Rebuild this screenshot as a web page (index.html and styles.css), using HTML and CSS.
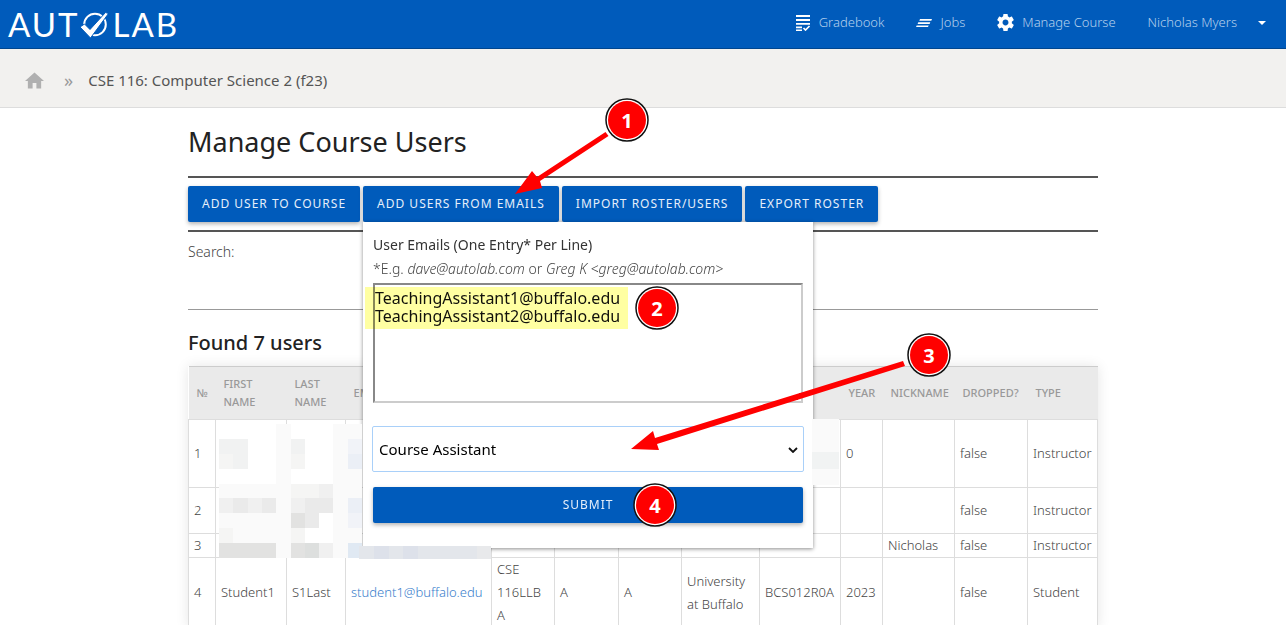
FILE: index.html
```html
<!DOCTYPE html>
<html lang="en">
<head>
<meta charset="utf-8">
<title>Manage Course Users</title>
<link rel="stylesheet" href="styles.css">
</head>
<body>
<header class="navbar">
  <a class="logo" href="#" aria-label="Autolab">
    <span>AUT</span>
    <svg class="logo-mark" viewBox="80 10 28 28" aria-hidden="true">
      <circle cx="95" cy="24.500" r="10.800" fill="none" stroke="#fff" stroke-width="2"/>
      <path d="M80 27L84.500 24L90 29.500L105.500 12.500L108.500 13.500L90.500 38Z" fill="#fff" stroke="#005bbb" stroke-width="1"/>
    </svg>
    <span>LAB</span>
  </a>
  <nav class="nav-links">
    <a class="nav-link" href="#">
      <svg class="nav-icon" viewBox="0 0 16 16" aria-hidden="true"><path d="M1 0h14v2H1zM1 4h14v2H1zM1 8h14v1.700H1zM1 11.500h6v1.700H1zM1 14.500h6v1.500H1z" fill="#fff"/><path d="M8.500 13l2 2 4-4" fill="none" stroke="#fff" stroke-width="1.700"/></svg>
      Gradebook
    </a>
    <a class="nav-link" href="#">
      <svg class="nav-icon" viewBox="0 0 16 16" aria-hidden="true"><path d="M4 4h12l-.7 1.700h-12zM2.300 7.200h12l-.7 1.700h-12zM.7 10.400h12l-.7 1.700H0z" fill="#fff"/></svg>
      Jobs
    </a>
    <a class="nav-link" href="#">
      <svg class="nav-icon gear" viewBox="2 2 20 20" aria-hidden="true"><path fill="#fff" d="M19.430 12.980c.04-.32.07-.64.07-.98s-.03-.66-.07-.98l2.110-1.650c.19-.15.24-.42.12-.64l-2-3.460c-.12-.22-.39-.3-.61-.22l-2.490 1c-.52-.4-1.080-.73-1.690-.98l-.38-2.650C14.460 2.180 14.250 2 14 2h-4c-.25 0-.46.18-.49.42l-.38 2.650c-.61.25-1.170.59-1.690.98l-2.490-1c-.23-.09-.49 0-.61.22l-2 3.460c-.13.22-.07.49.12.64l2.110 1.650c-.04.32-.07.65-.07.98s.03.66.07.98l-2.110 1.650c-.19.15-.24.42-.12.64l2 3.460c.12.22.39.3.61.22l2.490-1c.52.4 1.080.73 1.690.98l.38 2.650c.03.24.24.42.49.42h4c.25 0 .46-.18.49-.42l.38-2.650c.61-.25 1.170-.59 1.690-.98l2.490 1c.23.09.49 0 .61-.22l2-3.460c.12-.22.07-.49-.12-.64l-2.110-1.650zM12 15.500c-1.930 0-3.500-1.570-3.500-3.500s1.570-3.500 3.500-3.500 3.500 1.570 3.500 3.500-1.570 3.500-3.500 3.500z"/></svg>
      Manage Course
    </a>
    <a class="nav-link user" href="#">
      Nicholas Myers
      <svg class="caret" viewBox="0 0 8 4" aria-hidden="true"><path d="M0 0h8L4 4z" fill="#fff"/></svg>
    </a>
  </nav>
</header>

<nav class="breadcrumb" aria-label="Breadcrumb">
  <a href="#" aria-label="Home"><svg class="home" viewBox="2 3 20 17" aria-hidden="true"><path d="M10 20v-6h4v6h5v-8h3L12 3 2 12h3v8z" fill="#b0b0b0"/></svg></a>
  <span class="sep">»</span>
  <a class="crumb" href="#">CSE 116: Computer Science 2 (f23)</a>
</nav>

<main class="content">
  <h1>Manage Course Users</h1>
  <div class="toolbar">
    <button type="button" class="btn">Add User to Course</button>
    <div class="dropdown">
      <button type="button" class="btn">Add Users From Emails</button>
      <form class="popup">
        <label class="popup-title" for="emails">User Emails (One Entry* Per Line)</label>
        <p class="hint">*E.g. <em>dave@autolab.com</em> or <em>Greg K &lt;greg@autolab.com&gt;</em></p>
        <textarea id="emails" class="emails">TeachingAssistant1@buffalo.edu
TeachingAssistant2@buffalo.edu</textarea>
        <div class="select-wrap">
          <select class="role" aria-label="Role"><option>Course Assistant</option></select>
          <svg class="chevron" viewBox="0 0 10 6" aria-hidden="true"><path d="M1 1l4 4 4-4" fill="none" stroke="#111" stroke-width="1.800"/></svg>
        </div>
        <button type="button" class="btn submit">Submit</button>
        <div class="marker-pen"></div>
      </form>
    </div>
    <button type="button" class="btn">Import Roster/Users</button>
    <button type="button" class="btn">Export Roster</button>
  </div>
  <div class="search">Search:</div>
  <h2>Found 7 users</h2>
  <table class="users">
    <colgroup>
      <col style="width:27px"><col style="width:71px"><col style="width:59px"><col style="width:146px"><col style="width:63px"><col style="width:64px"><col style="width:63px"><col style="width:78px"><col style="width:81px"><col style="width:42px"><col style="width:72px"><col style="width:73px"><col style="width:70px">
    </colgroup>
    <thead>
      <tr><th>№</th><th>First Name</th><th>Last Name</th><th>Email</th><th></th><th></th><th></th><th></th><th></th><th>Year</th><th>Nickname</th><th>Dropped?</th><th>Type</th></tr>
    </thead>
    <tbody>
      <tr class="tall"><td>1</td><td></td><td></td><td></td><td></td><td></td><td></td><td></td><td></td><td>0</td><td></td><td>false</td><td>Instructor</td></tr>
      <tr class="medium"><td>2</td><td></td><td></td><td></td><td></td><td></td><td></td><td></td><td></td><td></td><td></td><td>false</td><td>Instructor</td></tr>
      <tr><td>3</td><td></td><td></td><td></td><td></td><td></td><td></td><td></td><td></td><td></td><td>Nicholas</td><td>false</td><td>Instructor</td></tr>
      <tr><td>4</td><td>Student1</td><td>S1Last</td><td><a href="#">student1@buffalo.edu</a></td><td>CSE 116LLB A</td><td>A</td><td>A</td><td>University at Buffalo</td><td>BCS012R0A</td><td>2023</td><td></td><td>false</td><td>Student</td></tr>
    </tbody>
  </table>

  <svg class="annotations" viewBox="188 108 910 517" width="910" height="517" aria-hidden="true">
    <g shape-rendering="crispEdges">
      <path fill="#fff" d="M219 424h143v134H219z"/>
      <path fill="#fafafa" d="M276 424h15v134h-15zM333 424h29v134h-29zM219 484h57v14h-57zM219 513h57v15h-57zM219 528h72v15h-72z"/>
      <path fill="#f1f2f2" d="M219 439h29v15h-29zM233 454h15v15h-15zM291 439h14v15h-14z"/>
      <path fill="#f5f5f4" d="M219 454h14v15h-14zM291 454h14v15h-14zM291 484h28v14h-28zM219 528h14v15h-14zM291 528h14v15h-14z"/>
      <path fill="#f0f0f0" d="M319 484h14v14h-14zM219 498h14v15h-14zM248 498h14v15h-14zM291 498h14v15h-14zM319 543h14v15h-14z"/>
      <path fill="#eaeaea" d="M233 498h15v15h-15zM262 498h14v15h-14zM305 498h28v15h-28zM305 513h14v15h-14z"/>
      <path fill="#e2e2e1" d="M219 543h57v15h-57zM291 513h14v15h-14zM291 543h14v15h-14z"/>
      <path fill="#dddfde" d="M305 543h14v15h-14z"/>
      <path fill="#fff" d="M319 513h14v15h-14z"/>
      <path fill="#f1f3f8" d="M348 439h14v15h-14zM348 513h14v15h-14z"/>
      <path fill="#ebeff6" d="M348 454h14v15h-14zM348 498h14v15h-14z"/>
      <path fill="#e0e9f3" d="M348 543h14v15h-14z"/>
      <path fill="#e3e6eb" d="M359 546h132v13H359z"/>
      <path fill="#dde1ea" d="M374 546h15v13h-15zM403 546h15v13h-15z"/>
      <path fill="#e8e9eb" d="M477 546h14v13h-14z"/>
      <path fill="#fafafa" d="M812 419h27v66h-27z"/>
      <path fill="#f1f3f3" d="M812 452h27v17h-27z"/>
    </g>
    <g fill="#f00">
      <path d="M605.500 132L608.500 136L540 181L542 188L515 194L532 171L537 177Z"/>
      <path d="M903 361L905 366L657 444L659 450L631 449L653 431L655 438Z"/>
    </g>
    <g class="badges">
      <g><circle class="ring" cx="627" cy="120" r="21"/><circle class="disc" cx="627" cy="120" r="19"/><text x="627" y="128">1</text></g>
      <g><circle class="ring" cx="657" cy="308" r="21"/><circle class="disc" cx="657" cy="308" r="19"/><text x="657" y="316">2</text></g>
      <g><circle class="ring" cx="929" cy="355" r="21"/><circle class="disc" cx="929" cy="355" r="19"/><text x="929" y="363">3</text></g>
      <g><circle class="ring" cx="655" cy="505" r="21"/><circle class="disc" cx="655" cy="505" r="19"/><text x="655" y="513">4</text></g>
    </g>
  </svg>
</main>
</body>
</html>
```
FILE: styles.css
```css
* { box-sizing: border-box; }
html { overflow: hidden; }
body {
  margin: 0;
  background: #fff;
  color: #444;
  font: 300 14px/23px "Noto Sans", "Open Sans", sans-serif;
}
a { color: inherit; text-decoration: none; }
svg { display: block; }

.navbar {
  display: flex;
  align-items: center;
  justify-content: space-between;
  height: 49px;
  padding: 0 20px 0 8px;
  background: #005bbb;
  border-bottom: 1px solid #00468f;
}
.logo {
  display: flex;
  align-items: center;
  color: #fff;
  font: 400 33px/48px Lato, sans-serif;
  letter-spacing: 2px;
}
.logo-mark { width: 28px; height: 28px; margin-right: 5px; }
.nav-links { display: flex; align-items: center; gap: 32px; margin-top: -3px; }
.nav-link {
  display: flex;
  align-items: center;
  gap: 8px;
  color: #b5d0ec;
  font-size: 13px;
}
.nav-link.user { gap: 21px; }
.nav-icon { width: 16px; height: 16px; }
.gear { width: 17px; height: 17px; }
.caret { width: 8px; height: 4px; }

.breadcrumb {
  display: flex;
  align-items: center;
  height: 59px;
  padding: 4px 25px 0;
  background: #f2f1ef;
  border-bottom: 1px solid #ddd;
}
.home { width: 19px; height: 17px; }
.sep { margin: 0 15px 0 20px; color: #999; font-size: 18px; font-weight: 400; }
.crumb { color: #555; font-size: 15px; font-weight: 400; }

.content { position: relative; padding: 0 188px; }
h1 {
  margin: 0;
  padding: 14px 0 15px;
  color: #222;
  font-size: 27px;
  font-weight: 400;
  line-height: 39px;
}
.toolbar {
  display: flex;
  gap: 3px;
  padding: 8px 0;
  border-top: 2px solid #555;
  border-bottom: 2px solid #555;
}
.btn {
  height: 36px;
  padding: 0 14px;
  border: 0;
  border-radius: 2px;
  background: #005bbb;
  color: #e6effa;
  font: 400 12px/36px "Noto Sans", sans-serif;
  letter-spacing: 1px;
  text-transform: uppercase;
  white-space: nowrap;
  box-shadow: 0 2px 4px rgba(0, 0, 0, .3);
}
.dropdown { position: relative; }
.popup {
  position: absolute;
  top: 36px;
  left: 0;
  z-index: 2;
  display: flex;
  flex-direction: column;
  width: 450px;
  padding: 10px 10px 25px;
  background: #fff;
  box-shadow: 0 1px 4px rgba(0, 0, 0, .45);
}
.popup-title { color: #333; font-weight: 400; line-height: 26px; }
.hint { margin: 0; line-height: 22px; }
.emails {
  height: 120px;
  margin: 3px 0 23px;
  padding: 4px 0;
  border: 2px solid #ccc;
  border-top-color: #888;
  border-left-color: #888;
  background: #fff;
  color: #111;
  font: 400 16px/18px "Noto Sans", sans-serif;
  resize: vertical;
}
.select-wrap { position: relative; margin: 0 -1px 15px; }
.role {
  display: block;
  width: 100%;
  height: 46px;
  padding: 0 6px;
  appearance: none;
  border: 1px solid #a9d0f9;
  border-radius: 2px;
  background: #fff;
  color: #000;
  font: 400 15px "Noto Sans", sans-serif;
}
.chevron { position: absolute; right: 6px; top: 21px; width: 10px; height: 6px; }
.marker-pen {
  position: absolute;
  top: 65px;
  left: 2px;
  width: 263px;
  height: 42px;
  background: #ffffa2;
  mix-blend-mode: multiply;
  pointer-events: none;
}

.search {
  height: 78px;
  padding-top: 8px;
  border-bottom: 1px solid #999;
}
h2 {
  margin: 0;
  padding: 18px 0 9px;
  color: #222;
  font-size: 20px;
  font-weight: 500;
  line-height: 29px;
}
.users {
  width: 100%;
  table-layout: fixed;
  border-collapse: collapse;
  box-shadow: 0 0 12px rgba(0, 0, 0, .1);
  font-size: 13px;
}
.users th {
  height: 53px;
  padding: 0 8px;
  border-top: 1px solid #ccc;
  background: #eaeaea;
  color: #999;
  font-size: 11px;
  font-weight: 500;
  line-height: 18px;
  text-align: left;
  text-transform: uppercase;
}
.users td {
  height: 24px;
  padding: 0 5px;
  border: 1px solid #ddd;
}
.users .tall td { height: 68px; }
.users .medium td { height: 46px; }
.users td a { color: #3a80cc; }

.annotations {
  position: absolute;
  top: 0;
  left: 188px;
  z-index: 3;
  overflow: visible;
  pointer-events: none;
}
.ring { fill: #fff; stroke: #111; stroke-width: 1.5; }
.disc { fill: #f00; }
.badges text {
  fill: #fff;
  font: 700 20px "Noto Sans", sans-serif;
  text-anchor: middle;
}
```
